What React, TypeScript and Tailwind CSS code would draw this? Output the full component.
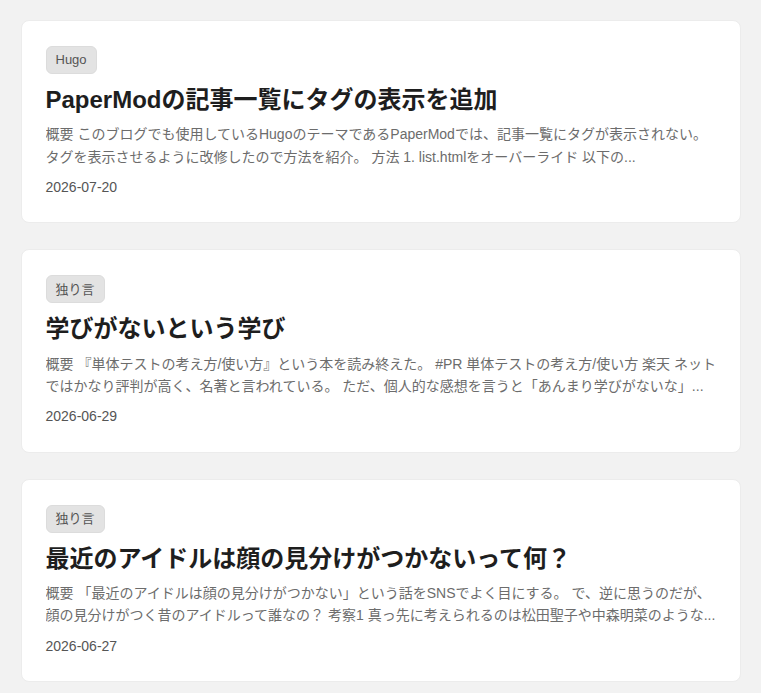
import React from "react";

type Post = {
  tag: string;
  title: string;
  lines: [string, string];
  date: string;
};

const posts: Post[] = [
  {
    tag: "Hugo",
    title: "PaperModの記事一覧にタグの表示を追加",
    lines: [
      "概要 このブログでも使用しているHugoのテーマであるPaperModでは、記事一覧にタグが表示されない。",
      "タグを表示させるように改修したので方法を紹介。 方法 1. list.htmlをオーバーライド 以下の...",
    ],
    date: "2026-07-20",
  },
  {
    tag: "独り言",
    title: "学びがないという学び",
    lines: [
      "概要 『単体テストの考え方/使い方』という本を読み終えた。 #PR 単体テストの考え方/使い方 楽天 ネット",
      "ではかなり評判が高く、名著と言われている。 ただ、個人的な感想を言うと「あんまり学びがないな」...",
    ],
    date: "2026-06-29",
  },
  {
    tag: "独り言",
    title: "最近のアイドルは顔の見分けがつかないって何？",
    lines: [
      "概要 「最近のアイドルは顔の見分けがつかない」という話をSNSでよく目にする。 で、逆に思うのだが、",
      "顔の見分けがつく昔のアイドルって誰なの？ 考察1 真っ先に考えられるのは松田聖子や中森明菜のような...",
    ],
    date: "2026-06-27",
  },
];

function Card({ post }: { post: Post }) {
  return (
    <article className="bg-white border border-[#ececec] rounded-[8px] px-[24px] pt-[25px] pb-[24px]">
      <div className="flex">
        <span className="h-[28px] flex items-center px-[9px] rounded-[6px] bg-[#e3e3e3] border border-[#dcdcdc] text-[13px] text-[#555555]">
          {post.tag}
        </span>
      </div>
      <h2 className="mt-[10px] text-[24px] leading-[1.3] font-bold text-[#1e1e1e]">
        {post.title}
      </h2>
      <div className="mt-[8px] text-[14px] leading-[1.6] text-[#6c6c6c]">
        <p className="whitespace-nowrap overflow-hidden">{post.lines[0]}</p>
        <p className="whitespace-nowrap overflow-hidden">{post.lines[1]}</p>
      </div>
      <div className="mt-[8px] text-[14px] leading-[1.6] text-[#555555]">
        {post.date}
      </div>
    </article>
  );
}

export default function App() {
  return (
    <div
      className="min-h-[693px] bg-[#f2f2f2] pt-[20px] pb-[20px]"
      style={{ fontFamily: '"Liberation Sans", "Noto Sans CJK JP", sans-serif' }}
    >
      <main className="mx-auto w-[720px] flex flex-col gap-[26px]">
        {posts.map((p) => (
          <Card key={p.date} post={p} />
        ))}
      </main>
    </div>
  );
}
